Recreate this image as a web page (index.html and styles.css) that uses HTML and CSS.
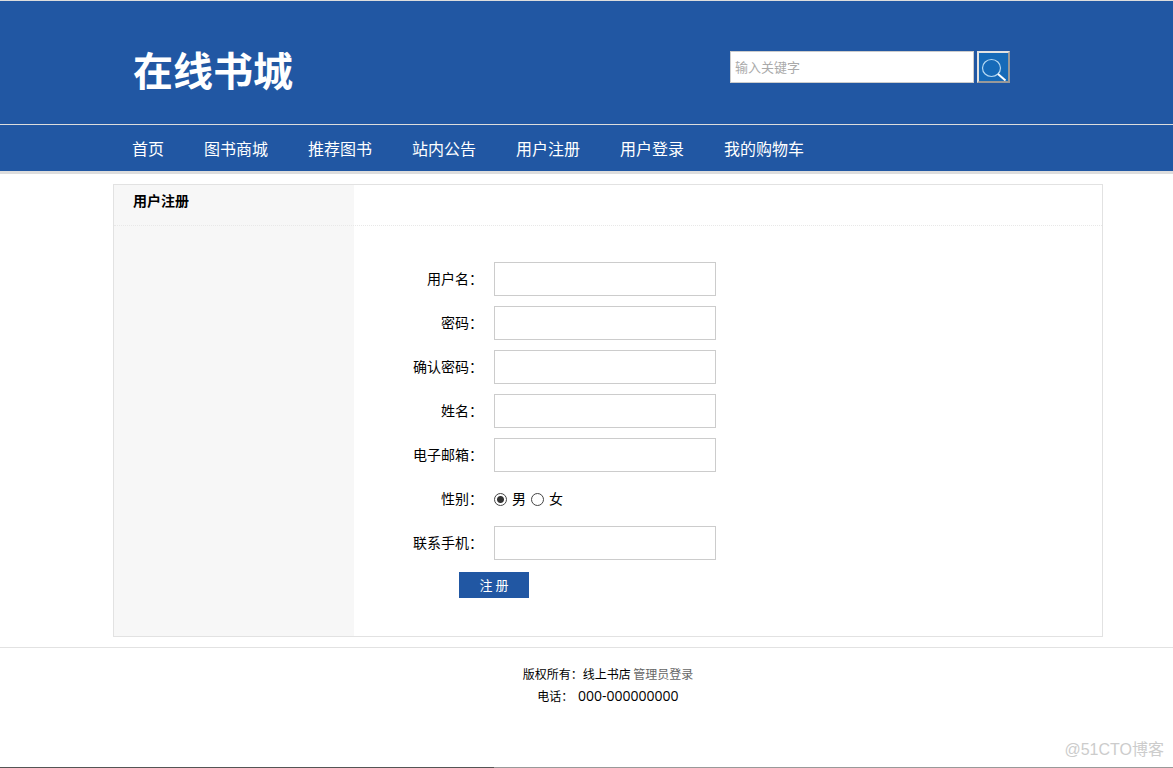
FILE: index.html
```
<!DOCTYPE html>
<html lang="zh-CN">
<head>
<meta charset="utf-8">
<meta name="viewport" content="width=device-width, initial-scale=1">
<title>用户注册</title>
<link rel="stylesheet" href="styles.css">
</head>
<body>
<header class="header">
  <div class="wrap header-inner">
    <h1 class="logo">在线书城</h1>
    <form class="search" role="search">
      <input class="search-input" type="text" placeholder="输入关键字" aria-label="输入关键字">
      <button class="search-button" type="button" aria-label="搜索">
        <svg viewBox="0 0 29 28" width="29" height="28" fill="none" aria-hidden="true">
          <ellipse cx="12.5" cy="15" rx="9" ry="8.500" stroke="#b4d8f2" stroke-width="1.200"/>
          <path d="M19 21L26.500 27.500" stroke="#fff" stroke-width="2"/>
        </svg>
      </button>
    </form>
  </div>
</header>
<nav class="nav">
  <ul class="wrap nav-list">
    <li><a href="#">首页</a></li>
    <li><a href="#">图书商城</a></li>
    <li><a href="#">推荐图书</a></li>
    <li><a href="#">站内公告</a></li>
    <li><a href="#">用户注册</a></li>
    <li><a href="#">用户登录</a></li>
    <li><a href="#">我的购物车</a></li>
  </ul>
</nav>
<main class="wrap panel">
  <h2 class="panel-title">用户注册</h2>
  <form class="form">
    <div class="row"><label for="user">用户名：</label><input class="field" id="user" type="text"></div>
    <div class="row"><label for="pwd">密码：</label><input class="field" id="pwd" type="password"></div>
    <div class="row"><label for="pwd2">确认密码：</label><input class="field" id="pwd2" type="password"></div>
    <div class="row"><label for="name">姓名：</label><input class="field" id="name" type="text"></div>
    <div class="row"><label for="email">电子邮箱：</label><input class="field" id="email" type="email"></div>
    <div class="row" role="radiogroup" aria-labelledby="sex">
      <span class="row-label" id="sex">性别：</span>
      <div class="options">
        <input class="radio" id="male" type="radio" name="sex" checked><label for="male">男</label>
        <input class="radio" id="female" type="radio" name="sex"><label for="female">女</label>
      </div>
    </div>
    <div class="row"><label for="phone">联系手机：</label><input class="field" id="phone" type="tel"></div>
    <button class="submit" type="button">注 册</button>
  </form>
</main>
<footer class="footer">
  <div class="wrap">
    <p>版权所有：线上书店 <a href="#">管理员登录</a></p>
    <p>电话： <span class="tel">000-000000000</span></p>
  </div>
  <span class="watermark">@51CTO博客</span>
</footer>
</body>
</html>
```
FILE: styles.css
```
* {
  box-sizing: border-box;
}

body {
  display: flex;
  flex-direction: column;
  min-height: 100vh;
  margin: 0;
  background: #fff;
  color: #000;
  font: 14px/20px "Noto Sans CJK SC", sans-serif;
}

h1, h2, p, ul {
  margin: 0;
  padding: 0;
}

a {
  text-decoration: none;
}

input, button {
  margin: 0;
  border-radius: 0;
  font-family: inherit;
}

.wrap {
  margin: 0 70px 0 113px;
}

.header {
  border-top: 1px solid #ddd;
  background: #2157a3;
}

.header-inner {
  display: flex;
  justify-content: space-between;
  align-items: flex-start;
  padding: 50px 93px 37px 20px;
}

.logo {
  color: #fff;
  font-size: 40px;
  font-weight: 700;
  line-height: 36px;
}

.search {
  display: flex;
  gap: 3px;
}

.search-input {
  width: 244px;
  height: 32px;
  padding: 0 4px 2px;
  border: 1px solid #ccc;
  background: #fff;
  font-size: 13px;
}

.search-input::placeholder {
  color: #aaa;
}

.search-button {
  width: 33px;
  height: 32px;
  padding: 0;
  border: 2px solid;
  border-color: #e3e3e3 #999 #999 #e3e3e3;
  background: #166ab8;
}

.search-button svg {
  display: block;
}

.nav {
  border-top: 1px solid #ddd;
  border-bottom: 3px solid #ddd;
  background: #2157a3;
}

.nav-list {
  display: flex;
  gap: 40px;
  padding-left: 19px;
  list-style: none;
}

.nav-list a {
  display: block;
  color: #fff;
  font-size: 16px;
  line-height: 46px;
}

.panel {
  margin-top: 10px;
  border: 1px solid #e2e2e2;
  background: linear-gradient(#f7f7f7, #f7f7f7) left / 240px 100% no-repeat;
}

.panel-title {
  height: 41px;
  padding: 5px 19px;
  border-bottom: 1px dotted #e8e8e8;
  font-size: 14px;
  font-weight: 700;
  line-height: 20px;
}

.form {
  padding: 31px 20px 38px 240px;
}

.row {
  display: grid;
  grid-template-columns: 129px 222px;
  column-gap: 11px;
  align-items: center;
  height: 44px;
}

.row > label,
.row-label {
  padding-bottom: 3px;
  text-align: right;
}

.field {
  width: 100%;
  height: 34px;
  padding: 0 10px;
  border: 1px solid #ccc;
  background: #fff;
  font-size: 14px;
}

.options {
  display: flex;
  align-items: center;
  gap: 5px;
}

.options label {
  padding-bottom: 2px;
}

.radio {
  appearance: none;
  width: 13px;
  height: 13px;
  border: 1px solid #444;
  border-radius: 50%;
  background: #fff;
}

.radio:checked {
  background: radial-gradient(circle, #333 3px, #fff 4px);
}

.submit {
  display: block;
  width: 70px;
  height: 26px;
  margin: 7px 0 0 105px;
  padding: 0 0 2px;
  border: 0;
  background: #2157a3;
  color: #fff;
  font-size: 13px;
}

.footer {
  position: relative;
  flex: 1;
  margin-top: 10px;
  padding-top: 15px;
  border-top: 1px solid #e2e2e2;
  background: linear-gradient(90deg, #555 494px, #999 494px) bottom / 100% 1px no-repeat;
  font-size: 12px;
  line-height: 22px;
  text-align: center;
}

.footer a {
  color: #666;
}

.tel {
  margin-left: 2px;
  font-family: "Open Sans", "DejaVu Sans", sans-serif;
  font-size: 14px;
}

.watermark {
  position: absolute;
  right: 9px;
  bottom: 7px;
  color: #ccc;
  font-family: "Liberation Sans", "Noto Sans CJK SC", sans-serif;
  font-size: 16px;
}
```
